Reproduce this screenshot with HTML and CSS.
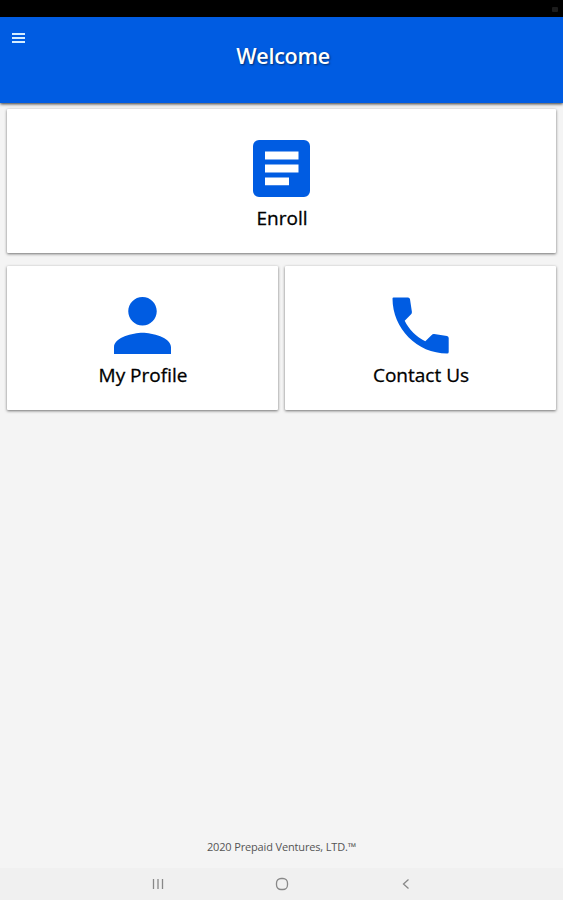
FILE: index.html
```
<!DOCTYPE html>
<html lang="en">
<head>
    <meta charset="UTF-8">
    <meta name="viewport" content="width=device-width, initial-scale=1.0">
    <title>Welcome</title>
    <link rel="stylesheet" href="styles.css">
</head>
<body>
    <div class="status-bar"><span class="status-dot"></span></div>
    <header class="header">
        <button class="menu" aria-label="Menu">
            <svg width="13" height="10" viewBox="0 0 13 10">
                <path d="M0 0h13v2H0zM0 4h13v2H0zM0 8h13v2H0z" fill="#d5edff"/>
            </svg>
        </button>
        <h1 class="title">Welcome</h1>
    </header>
    <main class="content">
        <a class="card card-wide">
            <svg class="icon" viewBox="0 0 57 57">
                <path fill-rule="evenodd" d="M6 0h45a6 6 0 0 1 6 6v45a6 6 0 0 1-6 6H6a6 6 0 0 1-6-6V6a6 6 0 0 1 6-6zM12 11.500v8h33.500v-8zM12 24.500v8h33.500v-8zM12 37.500v7.700h24v-7.700z"/>
            </svg>
            <span class="label">Enroll</span>
        </a>
        <a class="card">
            <svg class="icon" viewBox="64 64 384 384">
                <path d="M256 256c52.805 0 96-43.201 96-96s-43.195-96-96-96-96 43.201-96 96 43.195 96 96 96zm0 48c-63.598 0-192 32.402-192 96v48h384v-48c0-63.598-128.402-96-192-96z"/>
            </svg>
            <span class="label">My Profile</span>
        </a>
        <a class="card">
            <svg class="icon" viewBox="0 0 57 57">
                <path d="M1.500 .5H16q1.700 0 2 1.700L19.900 14.800q.2 1.500-.8 2.500L12.700 23.700c4.200 8.600 11.900 16.400 20.600 20.600L39.700 37.900q1-1 2.500-.8L55 39q1.700.3 1.700 2V55q0 1.500-1.500 1.500C25 56.500 .5 31.500 .5 1.500Q.5 .5 1.500 .5z"/>
            </svg>
            <span class="label">Contact Us</span>
        </a>
    </main>
    <footer class="footer">2020 Prepaid Ventures, LTD.™</footer>
    <nav class="nav-bar">
        <svg width="12" height="12" viewBox="0 0 12 12">
            <path d="M1.500 1v10M6 1v10M10.500 1v10"/>
        </svg>
        <svg width="14" height="14" viewBox="0 0 14 14">
            <rect x="1.500" y="1.500" width="11" height="11" rx="4.500"/>
        </svg>
        <svg width="12" height="12" viewBox="0 0 12 12">
            <path d="M8.500 1.500L3.500 6l5 4.500"/>
        </svg>
    </nav>
</body>
</html>
```

FILE: styles.css
```
* {
    box-sizing: border-box;
}

body {
    margin: 0;
    height: 100vh;
    display: flex;
    flex-direction: column;
    background: #f4f4f4;
    color: #000;
    font-family: "Open Sans", "Noto Sans", sans-serif;
    overflow: hidden;
}

.status-bar {
    height: 17px;
    padding: 7px 5px 0 0;
    display: flex;
    justify-content: flex-end;
    background: #000;
}

.status-dot {
    width: 6px;
    height: 5px;
    border-radius: 1px;
    background: #1c1c1c;
}

/* Header */
.header {
    height: 86px;
    display: grid;
    grid-template-columns: 40px 1fr 40px;
    align-items: start;
    background: #005ce2;
    box-shadow: 0 1px 3px rgba(0, 0, 0, 0.8);
}

.menu {
    margin: 16px 0 0 12px;
    padding: 0;
    border: none;
    background: none;
    width: 13px;
    height: 10px;
}

.menu svg {
    display: block;
}

.title {
    margin: 24px 0 0 3px;
    color: #fff;
    font-size: 21.5px;
    line-height: 30px;
    font-weight: 600;
    letter-spacing: -0.25px;
    text-align: center;
    text-shadow: 1px 1px 2px rgba(0, 0, 0, 0.5);
}

/* Cards */
.content {
    flex: 1;
    display: grid;
    grid-template-columns: 1fr 1fr;
    grid-auto-rows: 144px;
    gap: 13px 7px;
    padding: 6px 7px 0;
}

.card {
    display: flex;
    flex-direction: column;
    align-items: center;
    padding-top: 31px;
    background: #fff;
    border-radius: 1px;
    box-shadow: 0 1px 3px rgba(0, 0, 0, 0.55);
}

.card-wide {
    grid-column: 1 / 3;
}

.icon {
    width: 57px;
    height: 57px;
    fill: #005ce2;
}

.label {
    margin: 7px 0 0 1px;
    font-size: 19px;
    line-height: 28px;
    -webkit-text-stroke: 0.3px #000;
}

/* Footer */
.footer {
    height: 29px;
    font-size: 11px;
    line-height: 15px;
    letter-spacing: -0.15px;
    text-align: center;
    color: #555;
}

.nav-bar {
    height: 32px;
    padding-left: 1px;
    display: flex;
    justify-content: center;
    align-items: center;
    gap: 111px;
    background: #f0f0f0;
    fill: none;
    stroke: #888;
    stroke-width: 1.3;
}
```
